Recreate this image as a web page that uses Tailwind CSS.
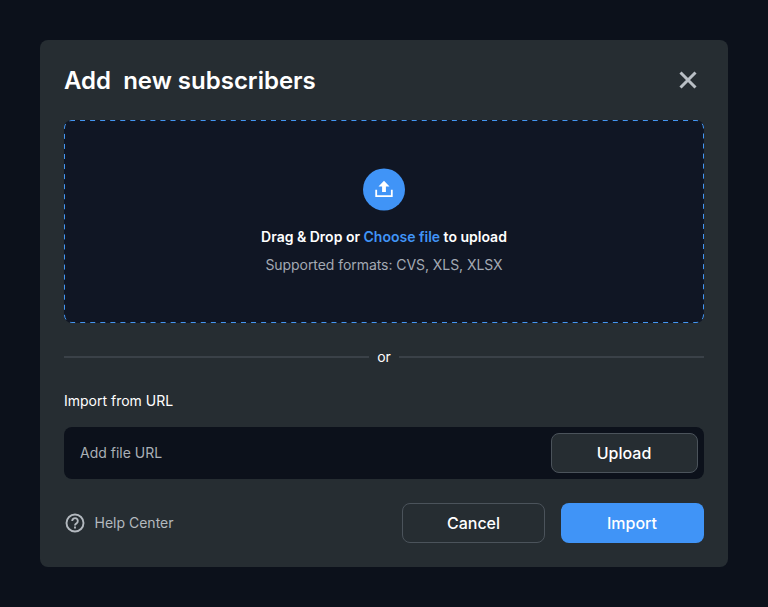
<!DOCTYPE html>
<html lang="en">
<head>
<meta charset="utf-8">
<title>Add new subscribers</title>
<script src="https://cdn.jsdelivr.net/npm/@tailwindcss/browser@4"></script>
</head>
<body class="flex h-screen flex-col overflow-hidden bg-[#0c111b] p-10 font-['Inter',sans-serif] text-white">
<main class="flex h-[527px] w-[688px] flex-col rounded-lg bg-[#262d32] px-6 pb-6">
  <header class="flex h-20 items-center justify-between">
    <h1 class="pt-0.5 text-2xl font-semibold whitespace-pre"><span>Add  new subscribers</span></h1>
    <button aria-label="Close" class="flex size-8 items-center justify-center text-[#b9bfc5]">
      <svg class="size-8" viewBox="0 0 32 32" fill="none" stroke="currentColor" stroke-width="3"><path d="M8.5 8.5 23.500 23.500M23.500 8.500 8.500 23.500"/></svg>
    </button>
  </header>
  <section class="relative flex h-[203px] flex-none flex-col items-center rounded-lg bg-[#101624] pt-12">
    <svg class="absolute inset-0 h-full w-full" viewBox="0 0 640 203" fill="none" stroke="#4496f2"><rect x=".5" y=".5" width="639" height="202" rx="7.5" stroke-dasharray="5 5.05" stroke-dashoffset="2"/></svg>
    <svg class="h-[43px] w-[42px]" viewBox="0 0 42 43" fill="none"><circle cx="21" cy="21.500" r="21" fill="#4094f7"/><path d="M13.200 21.800V28.200H28.800V21.800" stroke="white" stroke-width="1.8"/><path d="M21 12.800 26.500 18.500H22.900V24H19.100V18.500H15.500Z" fill="white"/></svg>
    <p class="mt-4 text-sm leading-5 font-semibold">Drag &amp; Drop or <a class="text-[#4094f7]">Choose file</a> to upload</p>
    <p class="mt-2 text-sm leading-5 tracking-[-0.06px] text-[#a3a9b3]">Supported formats: CVS, XLS, XLSX</p>
  </section>
  <div class="mt-6 flex h-5 items-center gap-2 text-sm leading-5">
    <span class="h-0.5 flex-1 bg-[#3a4148]"></span><span>or</span><span class="h-0.5 flex-1 bg-[#3a4148]"></span>
  </div>
  <label class="mt-6 text-sm leading-5">Import from URL</label>
  <div class="mt-4 flex h-[52px] items-center justify-between rounded-lg bg-[#0c111b] pr-1.5 pl-4">
    <span class="text-sm leading-5 text-[#a9afb6]">Add file URL</span>
    <button class="h-10 w-[147px] rounded-lg border border-[#4b535b] bg-[#262d32] pr-px text-base font-medium">Upload</button>
  </div>
  <footer class="mt-6 flex h-10 items-center">
    <svg class="size-[22px] text-[#b3b9bf]" viewBox="0 0 22 22" fill="none" stroke="currentColor" stroke-width="1.9"><circle cx="11" cy="11" r="8.500"/><path d="M8.200 9a2.800 2.800 0 1 1 4.500 2.200C11.700 12 11 12.300 11 13.500"/><path d="M11 14.600v1.900"/></svg>
    <span class="ml-[8.500px] text-sm leading-5 text-[#b3b9bf]">Help Center</span>
    <button class="ml-auto h-10 w-[143px] rounded-lg border border-[#4b535b] text-base font-medium">Cancel</button>
    <button class="ml-4 h-10 w-[143px] rounded-lg bg-[#4094f7] pr-px text-base font-medium">Import</button>
  </footer>
</main>
</body>
</html>
